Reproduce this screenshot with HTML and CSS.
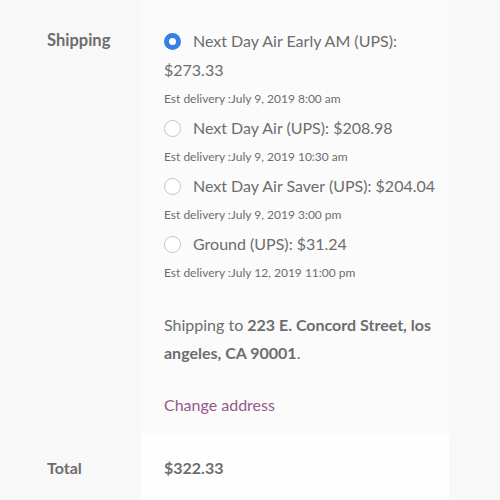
FILE: index.html
```html
<!DOCTYPE html>
<html lang="en">
<head>
  <meta charset="UTF-8" />
  <meta name="viewport" content="width=device-width, initial-scale=1.0" />
  <title>Cart totals</title>
  <link rel="stylesheet" href="styles.css">
</head>
<body>

  <div class="totals">
    <div class="row shipping">
      <div class="label">Shipping</div>
      <div class="value">
        <ul class="methods">
          <li>
            <span class="radio checked"></span><span class="method">Next Day Air Early AM (UPS): $273.33</span>
            <div class="est">Est delivery :July 9, 2019 8:00 am</div>
          </li>
          <li>
            <span class="radio"></span><span class="method">Next Day Air (UPS): $208.98</span>
            <div class="est">Est delivery :July 9, 2019 10:30 am</div>
          </li>
          <li>
            <span class="radio"></span><span class="method">Next Day Air Saver (UPS): $204.04</span>
            <div class="est">Est delivery :July 9, 2019 3:00 pm</div>
          </li>
          <li>
            <span class="radio"></span><span class="method">Ground (UPS): $31.24</span>
            <div class="est">Est delivery :July 12, 2019 11:00 pm</div>
          </li>
        </ul>
        <p class="destination">Shipping to <strong>223 E. Concord Street, los angeles, CA 90001</strong>.</p>
        <a href="#" class="change-address">Change address</a>
      </div>
    </div>
    <div class="row total">
      <div class="label">Total</div>
      <div class="value"><strong>$322.33</strong></div>
    </div>
  </div>

</body>
</html>
```

FILE: styles.css
```css
* {
  box-sizing: border-box;
}
body {
  font-family: Lato, 'Noto Sans', sans-serif;
  font-size: 16px;
  line-height: 29px;
  color: #6d6d6d;
  margin: 0;
  padding: 0;
  background: #f8f8f8;
  min-height: 100vh;
}
.totals {
  width: 449px;
}
.row {
  display: grid;
  grid-template-columns: 141px 1fr;
}
.label {
  background: #f8f8f8;
  font-weight: 700;
  padding-left: 47px;
}
.shipping .label {
  font-size: 16.5px;
}
.value {
  padding-left: 23px;
  padding-right: 4px;
}
.shipping .label {
  padding-top: 26px;
}
.shipping .value {
  background: #fbfbfb;
  padding-top: 26px;
  padding-bottom: 15px;
}
.total .label,
.total .value {
  padding-top: 19px;
  padding-bottom: 23px;
}
.total .value {
  background: #fefefe;
}
.methods {
  list-style: none;
  margin: 0;
  padding: 0;
}
.radio {
  display: inline-block;
  width: 17px;
  height: 17px;
  border: 1px solid #c4c4c4;
  border-radius: 50%;
  background: #fff;
  vertical-align: -3px;
  margin-right: 12px;
}
.radio.checked {
  border: 5px solid #3580e4;
  background: #fff;
}
.est {
  font-size: 12px;
}
.destination {
  margin: 24px 0 0;
  line-height: 28px;
}
.destination strong {
  font-weight: 700;
}
.change-address {
  display: block;
  margin-top: 24px;
  line-height: 28px;
  color: #96588a;
  text-decoration: none;
}
```
